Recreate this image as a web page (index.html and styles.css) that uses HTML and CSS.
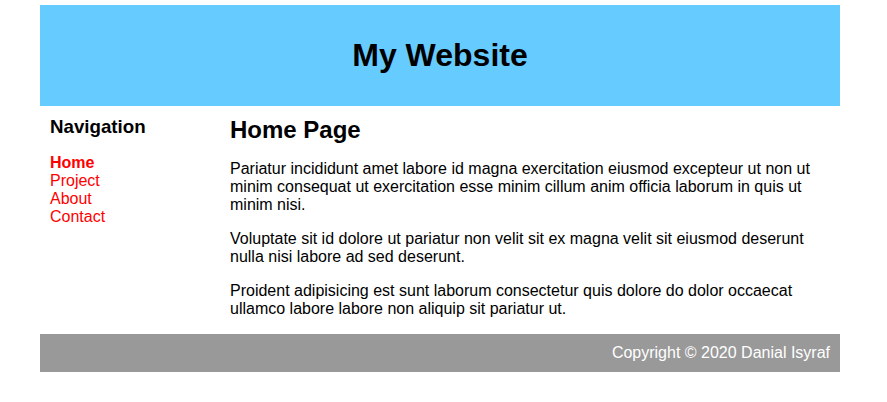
FILE: index.html
```html
<!DOCTYPE html>
<html lang="en">
<head>
<meta charset="utf-8">
<title>My Website</title>
<link rel="stylesheet" href="styles.css">
</head>
<body>
<div class="page">
  <header class="site-header">
    <h1 class="site-title">My Website</h1>
  </header>
  <div class="layout">
    <nav class="sidebar">
      <h3 class="sidebar-title">Navigation</h3>
      <ul class="nav-list">
        <li><a class="nav-link active" href="#">Home</a></li>
        <li><a class="nav-link" href="#">Project</a></li>
        <li><a class="nav-link" href="#">About</a></li>
        <li><a class="nav-link" href="#">Contact</a></li>
      </ul>
    </nav>
    <main class="content">
      <h2 class="content-title">Home Page</h2>
      <p>Pariatur incididunt amet labore id magna exercitation eiusmod excepteur ut non ut minim consequat ut exercitation esse minim cillum anim officia laborum in quis ut minim nisi.</p>
      <p>Voluptate sit id dolore ut pariatur non velit sit ex magna velit sit eiusmod deserunt nulla nisi labore ad sed deserunt.</p>
      <p>Proident adipisicing est sunt laborum consectetur quis dolore do dolor occaecat ullamco labore labore non aliquip sit pariatur ut.</p>
    </main>
  </div>
  <footer class="site-footer">Copyright &copy; 2020 Danial Isyraf</footer>
</div>
</body>
</html>
```
FILE: styles.css
```css
html, body {
  margin: 0;
  padding: 0;
  background: #fff;
}
body {
  font-family: "Liberation Sans", Arial, sans-serif;
  font-size: 16px;
  color: #000;
}
.page {
  width: 800px;
  margin: 5px 0 0 40px;
}
.site-header {
  background: #66ccff;
  padding: 32px 0;
  text-align: center;
}
.site-title {
  margin: 0;
  font-size: 32px;
  line-height: 37px;
  font-weight: bold;
}
.layout {
  display: flex;
}
.sidebar {
  width: 160px;
  padding: 10px 10px 0;
  flex: none;
}
.sidebar-title {
  margin: 0;
  font-size: 18.72px;
  font-weight: bold;
}
.nav-list {
  list-style: none;
  margin: 16px 0 0;
  padding: 0;
}
.nav-link {
  color: #ff0000;
  text-decoration: none;
}
.nav-link.active {
  font-weight: bold;
}
.content {
  flex: 1;
  padding: 10px 10px 0;
}
.content-title {
  margin: 0;
  font-size: 24px;
  font-weight: bold;
}
.content p {
  margin: 16px 0;
}
.site-footer {
  background: #999999;
  color: #fff;
  text-align: right;
  padding: 10px;
}
```
